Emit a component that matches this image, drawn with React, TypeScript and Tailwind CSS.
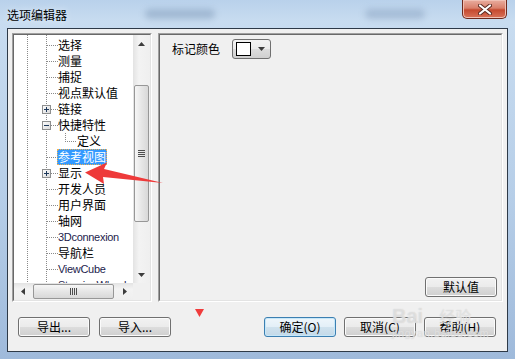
import clsx from "clsx";

type Row = { label: string; depth?: number; exp?: "plus" | "minus"; selected?: boolean; latin?: boolean };

const rows: Row[] = [
  { label: "选择" },
  { label: "测量" },
  { label: "捕捉" },
  { label: "视点默认值" },
  { label: "链接", exp: "plus" },
  { label: "快捷特性", exp: "minus" },
  { label: "定义", depth: 3 },
  { label: "参考视图", selected: true },
  { label: "显示", exp: "plus" },
  { label: "开发人员" },
  { label: "用户界面" },
  { label: "轴网" },
  { label: "3Dconnexion", latin: true },
  { label: "导航栏" },
  { label: "ViewCube", latin: true },
  { label: "SteeringWheels", latin: true },
];

function Connector({ depth = 2, exp, bare }: { depth?: number; exp?: "plus" | "minus"; bare?: boolean }) {
  const w = depth === 3 ? 63 : 44;
  return (
    <svg width={w} height={16} className="shrink-0">
      <g stroke="#8a8a8a" strokeDasharray="1 1">
        <line x1={13.5} y1={0} x2={13.5} y2={16} />
        <line x1={32.5} y1={0} x2={32.5} y2={16} />
        {depth === 2 && !bare && <line x1={exp ? 37 : 33} y1={8.5} x2={44} y2={8.5} />}
        {depth === 3 && (
          <>
            <line x1={51.5} y1={0} x2={51.5} y2={9} />
            <line x1={53} y1={8.5} x2={63} y2={8.5} />
          </>
        )}
      </g>
      {exp && (
        <g>
          <defs>
            <linearGradient id="expfill" x1="0" y1="0" x2="1" y2="1">
              <stop offset="0" stopColor="#ffffff" />
              <stop offset="1" stopColor="#d8d8d8" />
            </linearGradient>
          </defs>
          <rect x={28.5} y={4.5} width={8} height={8} fill="url(#expfill)" stroke="#8e8f8f" />
          <line x1={30} y1={8.5} x2={35} y2={8.5} stroke="#1e395b" />
          {exp === "plus" && <line x1={32.5} y1={6} x2={32.5} y2={11} stroke="#1e395b" />}
        </g>
      )}
    </svg>
  );
}

function Tri({ dir }: { dir: "up" | "down" | "left" | "right" }) {
  const pts = {
    up: "0,4 7,4 3.5,0",
    down: "0,0 7,0 3.5,4",
    left: "4,0 4,7 0,3.5",
    right: "0,0 0,7 4,3.5",
  }[dir];
  const vertical = dir === "up" || dir === "down";
  return (
    <svg width={vertical ? 7 : 4} height={vertical ? 4 : 7}>
      <polygon points={pts} fill="#3c3c3c" />
    </svg>
  );
}

function Grip({ horizontal }: { horizontal?: boolean }) {
  return (
    <svg width={horizontal ? 8 : 7} height={horizontal ? 7 : 8}>
      {[0, 2, 4, 6].map((o) =>
        horizontal ? (
          <line key={o} x1={o + 0.5} y1={0} x2={o + 0.5} y2={7} stroke="#4d4d4d" />
        ) : (
          <line key={o} x1={0} y1={o + 0.5} x2={7} y2={o + 0.5} stroke="#4d4d4d" />
        )
      )}
    </svg>
  );
}

function WinButton({ label, focused }: { label: string; focused?: boolean }) {
  return (
    <div
      className={clsx(
        "flex h-[20px] w-[72px] items-center justify-center rounded-[3px] border text-[12px] leading-none text-black",
        focused
          ? "border-[#3c7fb1] bg-[linear-gradient(180deg,#eef6fb_0%,#e3eff7_50%,#d0e2ee_50%,#c3d9e8_100%)] shadow-[inset_0_0_0_1px_#c6e7f9]"
          : "border-[#707070] bg-[linear-gradient(180deg,#f2f2f2_0%,#ebebeb_50%,#dddddd_50%,#cfcfcf_100%)] shadow-[inset_0_0_0_1px_#fbfbfb]"
      )}
    >
      {label}
    </div>
  );
}

function Sunken({ className, children }: { className?: string; children: React.ReactNode }) {
  return (
    <div className={clsx("border border-t-[#a0a0a0] border-l-[#a0a0a0] border-r-white border-b-white", className)}>
      <div className="flex h-full w-full flex-col border border-t-[#696969] border-l-[#696969] border-r-[#e3e3e3] border-b-[#e3e3e3]">
        {children}
      </div>
    </div>
  );
}

function TreePanel() {
  return (
    <Sunken className="h-[269px] w-[140px] bg-white">
      <div className="flex h-[248px]">
        <div className="h-[248px] w-[119px] overflow-hidden bg-white">
          <div className="-mt-[14px]">
            <div className="flex h-[16px]">
              <Connector bare />
            </div>
            {rows.map((r) => (
              <div key={r.label} className="flex h-[16px] items-center whitespace-nowrap">
                <Connector depth={r.depth} exp={r.exp} />
                <span
                  className={clsx(
                    "h-[16px] leading-[16px]",
                    r.latin ? "font-['Liberation_Sans',sans-serif] text-[11px] tracking-[-0.3px] text-[#1c1c4c]" : "text-[12px]",
                    r.selected && "-ml-[1px] bg-[#3399ff] px-[1px] text-white outline outline-1 -outline-offset-1 outline-dotted outline-[#f0b050]"
                  )}
                >
                  {r.label}
                </span>
              </div>
            ))}
          </div>
        </div>
        <div className="flex w-[17px] flex-col bg-[linear-gradient(90deg,#e3e3e3,#f3f3f3_35%,#efefef)]">
          <div className="flex h-[17px] items-center justify-center">
            <Tri dir="up" />
          </div>
          <div className="flex-1">
            <div className="mx-[1px] mt-[33px] flex h-[137px] items-center justify-center rounded-[2px] border border-[#979797] bg-[linear-gradient(90deg,#f6f6f6,#e6e6e6_50%,#d8d8d8)]">
              <Grip />
            </div>
          </div>
          <div className="flex h-[17px] items-center justify-center">
            <Tri dir="down" />
          </div>
        </div>
      </div>
      <div className="flex h-[17px]">
        <div className="flex w-[119px] bg-[linear-gradient(180deg,#e3e3e3,#f3f3f3_35%,#efefef)]">
          <div className="flex w-[17px] items-center justify-center">
            <Tri dir="left" />
          </div>
          <div className="flex flex-1 py-[1px]">
            <div className="ml-[2px] flex w-[81px] items-center justify-center rounded-[2px] border border-[#979797] bg-[linear-gradient(180deg,#f6f6f6,#e6e6e6_50%,#d8d8d8)]">
              <Grip horizontal />
            </div>
          </div>
          <div className="flex w-[17px] items-center justify-center">
            <Tri dir="right" />
          </div>
        </div>
        <div className="w-[17px] bg-[#f0f0f0]" />
      </div>
    </Sunken>
  );
}

function OptionsPanel() {
  return (
    <Sunken className="h-[269px] flex-1 bg-[#f0f0f0]">
      <div className="flex items-center pl-[12px] pt-[4px]">
        <span className="text-[12px] leading-[16px]">标记颜色</span>
        <div className="ml-[12px] flex h-[20px] w-[39px] items-center rounded-[3px] border border-[#707070] bg-[linear-gradient(180deg,#f2f2f2_0%,#ebebeb_50%,#dddddd_50%,#cfcfcf_100%)] pl-[3px]">
          <div className="h-[14px] w-[15px] border border-black bg-white" />
          <div className="ml-[7px] flex">
            <Tri dir="down" />
          </div>
        </div>
      </div>
      <div className="mt-auto flex justify-end pb-[3px] pr-[4px]">
        <WinButton label="默认值" />
      </div>
    </Sunken>
  );
}

export default function App() {
  return (
    <div className="relative h-[359px] w-[515px] overflow-hidden bg-[linear-gradient(180deg,#b9d1eb_0%,#c8dcf0_6%,#b6cee8_55%,#9fbadb_100%)] font-['Noto_Sans_CJK_SC',sans-serif] text-[12px] text-black">
      <div className="flex h-[28px]">
        <span className="ml-[7px] self-center pt-[2px] text-[12px] leading-[16px] text-black [text-shadow:0_0_6px_#e8f1fb]">
          选项编辑器
        </span>
        <div className="ml-[78px] mt-[9px] h-[10px] w-[70px] rounded-full bg-[#6f8aab]/40 blur-[3px]" />
        <div className="ml-[150px] mt-[9px] h-[10px] w-[60px] rounded-full bg-[#6f8aab]/35 blur-[3px]" />
        <div className="ml-auto mr-[8px] flex h-[19px] w-[45px] items-center justify-center rounded-b-[5px] border border-t-0 border-[#6e2a1e] bg-[linear-gradient(180deg,#e9ad9f_0%,#d9806b_45%,#c54a30_55%,#d9735a_100%)] shadow-[inset_0_0_0_1px_#f0c0b4]">
          <svg width="14" height="11" viewBox="0 0 14 11">
            <path d="M2 1.5 L12 9.5 M12 1.5 L2 9.5" stroke="#5a2a22" strokeWidth="4" strokeLinecap="round" />
            <path d="M2 1.5 L12 9.5 M12 1.5 L2 9.5" stroke="#ffffff" strokeWidth="2.2" strokeLinecap="round" />
          </svg>
        </div>
      </div>

      <div className="mx-[7px] flex h-[324px] flex-col border border-[#2e3a48] bg-[#f0f0f0] px-[4px] pt-[4px]">
        <div className="flex gap-[6px]">
          <TreePanel />
          <OptionsPanel />
        </div>
        <div className="mt-[15px] flex justify-between pl-[6px] pr-[7px]">
          <div className="flex gap-[9px]">
            <WinButton label="导出..." />
            <WinButton label="导入..." />
          </div>
          <div className="flex gap-[8px]">
            <WinButton label="确定(O)" focused />
            <WinButton label="取消(C)" />
            <WinButton label="帮助(H)" />
          </div>
        </div>
      </div>

      {/* annotation marks */}
      <svg className="pointer-events-none absolute left-0 top-0" width="515" height="359">
        <polygon points="85,172.5 107,162.5 104,169 163,183 103,177 104,184" fill="#ee3a3a" />
        <polygon points="195,309 204,309 199.5,317" fill="#f03c3c" />
      </svg>

      {/* faint watermark */}
      <div className="pointer-events-none absolute left-[392px] top-[306px] flex flex-col items-start text-white/40 [text-shadow:0_0_1px_#c8c8c8]">
        <div className="flex items-end font-['Liberation_Sans',sans-serif] text-[20px] font-bold leading-[20px]">
          Bai<span className="ml-[16px] font-['Noto_Sans_CJK_SC',sans-serif] text-[16px] font-normal">经验</span>
        </div>
        <div className="mt-[2px] font-['Liberation_Sans',sans-serif] text-[11px] leading-[11px] tracking-[0.5px]">
          jingyan.baidu.com
        </div>
      </div>
    </div>
  );
}
